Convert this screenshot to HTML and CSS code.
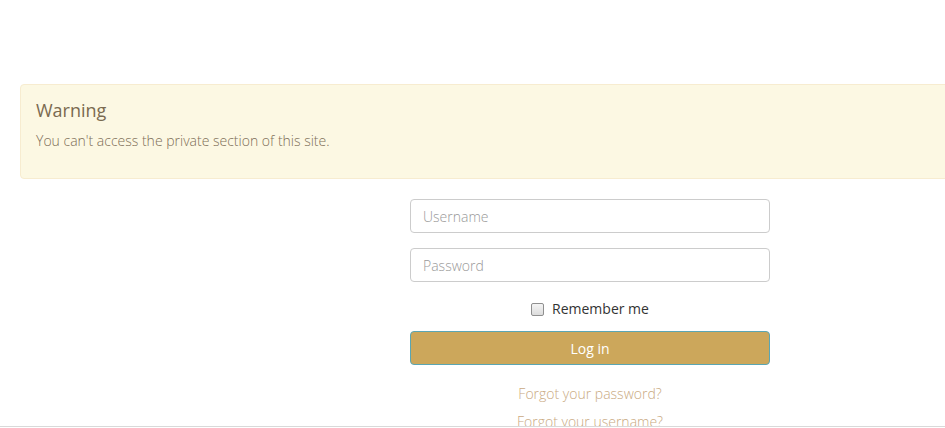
FILE: index.html
```html
<!DOCTYPE html>
<html lang="en">
<head>
    <meta charset="UTF-8">
    <meta name="viewport" content="width=device-width, initial-scale=1.0">
    <title>Login</title>
    <link rel="stylesheet" href="styles.css">
</head>
<body>
    <div class="page">
        <div class="alert">
            <h4>Warning</h4>
            <p>You can't access the private section of this site.</p>
        </div>
        <form class="login" action="/" method="POST">
            <input type="text" class="field" name="username" placeholder="Username">
            <input type="password" class="field" name="password" placeholder="Password">
            <div class="remember">
                <input type="checkbox" id="remember" name="remember">
                <label for="remember">Remember me</label>
            </div>
            <button type="submit" class="btn">Log in</button>
            <ul class="links">
                <li><a href="#">Forgot your password?</a></li>
                <li><a href="#">Forgot your username?</a></li>
            </ul>
        </form>
    </div>
    <div class="bottom-bar"></div>
</body>
</html>
```

FILE: styles.css
```css
body {
    margin: 0;
    padding: 0;
    font-family: "Open Sans", Arial, sans-serif;
    font-size: 14px;
    line-height: 20px;
    color: #333;
    background: #fff;
    overflow: hidden;
}
.page {
    width: 1140px;
    margin-left: 20px;
    padding-top: 84px;
}
.alert {
    background-color: #fcf8e3;
    border: 1px solid #f7ecd0;
    border-radius: 4px;
    padding: 15px 15px 17px;
    color: #7a6a50;
}
.alert h4 {
    margin: 0;
    font-size: 18px;
    font-weight: 400;
    line-height: 20px;
}
.alert p {
    margin: 11px 0 10px;
    font-weight: 300;
    color: #7d6e57;
}
.login {
    width: 360px;
    margin: 20px auto 0;
}
.field {
    display: block;
    box-sizing: border-box;
    width: 100%;
    height: 34px;
    padding: 6px 12px;
    margin-bottom: 15px;
    border: 1px solid #ccc;
    border-radius: 4px;
    font-family: inherit;
    font-size: 14px;
    font-weight: 300;
    color: #555;
}
.field::placeholder {
    color: #999;
}
.remember {
    display: flex;
    align-items: center;
    justify-content: center;
    margin-top: 17px;
    height: 20px;
    font-size: 14px;
}
.remember input {
    appearance: none;
    width: 13px;
    height: 13px;
    margin: 0 8px 0 0;
    border: 1px solid #8f8f8f;
    border-radius: 2px;
    background: linear-gradient(#f4f4f4, #dcdcdc);
}
.btn {
    display: block;
    width: 100%;
    height: 34px;
    margin-top: 12px;
    background-color: #cca75b;
    border: 1px solid #5aa6b3;
    border-radius: 4px;
    color: #fff;
    font-family: inherit;
    font-size: 14px;
    cursor: pointer;
}
.links {
    list-style: none;
    margin: 19px 0 0;
    padding: 0;
    text-align: center;
}
.links li {
    margin-bottom: 8px;
}
.links a {
    color: #c9a97f;
    font-weight: 300;
    text-decoration: none;
}
.bottom-bar {
    position: fixed;
    left: 0;
    right: 0;
    bottom: 0;
    height: 1px;
    border-top: 1px solid #d9d9d9;
    background: #fff;
}
```
